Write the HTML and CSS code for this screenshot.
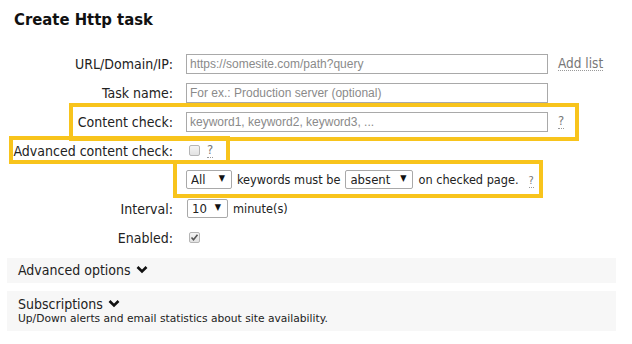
FILE: index.html
```html
<!DOCTYPE html>
<html lang="en">

<head>
    <meta charset="UTF-8">
    <meta name="viewport" content="width=device-width, initial-scale=1.0">
    <title>Create Http task</title>

    <link rel="stylesheet" href="styles.css">
</head>

<body>
    <div class="page">
        <h1 class="title">Create Http task</h1>

        <form action="#" method="post" class="task-form">
            <div class="row">
                <label for="url" class="lbl">URL/Domain/IP:</label>
                <div class="field">
                    <input type="text" id="url" class="text" placeholder="https://somesite.com/path?query">
                    <a href="#" class="hint add-list">Add list</a>
                </div>
            </div>

            <div class="row">
                <label for="name" class="lbl">Task name:</label>
                <div class="field">
                    <input type="text" id="name" class="text" placeholder="For ex.: Production server (optional)">
                </div>
            </div>

            <div class="row">
                <label for="keywords" class="lbl">Content check:</label>
                <div class="field">
                    <input type="text" id="keywords" class="text" placeholder="keyword1, keyword2, keyword3, ...">
                    <a href="#" class="hint q">?</a>
                </div>
            </div>

            <div class="row">
                <label class="lbl">Advanced content check:</label>
                <div class="field">
                    <span class="cb"></span>
                    <a href="#" class="hint q q-adv">?</a>
                </div>
            </div>

            <div class="row">
                <span class="lbl"></span>
                <div class="field">
                    <span class="sel sel-all"><select>
                        <option>All</option>
                        <option>Any</option>
                    </select></span>
                    <span class="txt">keywords must be</span>
                    <span class="sel sel-absent"><select>
                        <option>absent</option>
                        <option>present</option>
                    </select></span>
                    <span class="txt">on checked page.</span>
                    <a href="#" class="hint q q-small">?</a>
                </div>
            </div>

            <div class="row">
                <label class="lbl">Interval:</label>
                <div class="field">
                    <span class="sel sel-interval"><select>
                        <option>10</option>
                        <option>5</option>
                        <option>1</option>
                    </select></span>
                    <span class="txt">minute(s)</span>
                </div>
            </div>

            <div class="row">
                <label class="lbl">Enabled:</label>
                <div class="field">
                    <span class="cb checked">
                        <svg width="9" height="9" viewBox="0 0 9 9">
                            <path d="M1.5 4.5 L3.5 6.8 L7.5 1.8" fill="none" stroke="#555" stroke-width="1.6"/>
                        </svg>
                    </span>
                </div>
            </div>

            <div class="panel">
                <span class="panel-head">Advanced options
                    <svg class="chev" width="12" height="9" viewBox="0 0 12 9">
                        <path d="M1.5 2 L6 6.5 L10.5 2" fill="none" stroke="#111" stroke-width="2.6"/>
                    </svg>
                </span>
            </div>

            <div class="panel panel-subs">
                <span class="panel-head">Subscriptions
                    <svg class="chev" width="12" height="9" viewBox="0 0 12 9">
                        <path d="M1.5 2 L6 6.5 L10.5 2" fill="none" stroke="#111" stroke-width="2.6"/>
                    </svg>
                </span>
                <div class="panel-note">Up/Down alerts and email statistics about site availability.</div>
            </div>
        </form>

        <!-- highlight frames drawn over the form -->
        <span class="mark mark-content"></span>
        <span class="mark mark-adv"></span>
        <span class="mark mark-rule"></span>
    </div>
</body>

</html>
```

FILE: styles.css
```css
* {
    box-sizing: border-box;
    padding: 0;
    margin: 0;
}

body {
    background-color: white;
    font-family: "DejaVu Sans Condensed", "DejaVu Sans", sans-serif;
    font-size: 13px;
    color: #222;
}

.page {
    position: relative;
    width: 632px;
    height: 344px;
}

.title {
    padding: 10px 0 0 14px;
    height: 49px;
    font-size: 16.5px;
    line-height: 20px;
    font-weight: bold;
    color: #111;
}

.row {
    display: flex;
    align-items: center;
    height: 29px;
}

.lbl {
    width: 173px;
    text-align: right;
    flex-shrink: 0;
    font-size: 14px;
}

.field {
    display: flex;
    align-items: center;
    padding-left: 13px;
}

.text {
    width: 362px;
    height: 20px;
    padding: 0 3px;
    border: 1px solid #a9a9a9;
    font-family: "Liberation Sans", Arial, sans-serif;
    font-size: 12px;
    color: #333;
}

.text::placeholder {
    color: #8a8a8a;
}

a {
    text-decoration: none;
    color: #777;
}

.hint {
    border-bottom: 1px dotted #999;
    line-height: 14px;
}

.add-list {
    margin-left: 10px;
    font-size: 13.5px;
}

.q {
    margin-left: 10px;
}

.q-adv {
    margin-left: 7px;
}

.q-small {
    margin-left: 5px;
    font-size: 11px;
    line-height: 12px;
    margin-top: 4px;
}

.cb {
    display: inline-flex;
    align-items: center;
    justify-content: center;
    width: 11px;
    height: 11px;
    margin-left: 3px;
    border: 1px solid #b5b5b5;
    border-radius: 2px;
    background: linear-gradient(#f4f4f4, #e2e2e2);
}

.sel {
    position: relative;
    display: inline-block;
}

.sel select {
    appearance: none;
    -webkit-appearance: none;
    height: 19px;
    padding: 0 0 0 4px;
    border: 1px solid #a9a9a9;
    border-radius: 2px;
    background-color: white;
    font-family: "DejaVu Sans Condensed", "DejaVu Sans", sans-serif;
    font-size: 13px;
    color: #222;
}

.sel::after {
    content: "\25BC";
    position: absolute;
    right: 7px;
    top: 3px;
    font-size: 9px;
    color: #111;
    pointer-events: none;
}

.sel-all select {
    width: 46px;
}

.sel-absent select {
    width: 68px;
}

.sel-interval {
    margin-left: 1px;
}

.sel-interval select {
    width: 41px;
}

.txt {
    margin: 0 5px;
    font-size: 12.6px;
}

.panel {
    margin: 6px 16px 0 7px;
    height: 25px;
    padding: 4px 11px;
    background-color: #f7f7f7;
    font-size: 14px;
    line-height: 17px;
}

.panel-subs {
    margin-top: 8px;
    height: 40px;
    padding-top: 5px;
}

.chev {
    margin-left: 1px;
    vertical-align: 1px;
}

.panel-note {
    font-family: "DejaVu Sans", sans-serif;
    font-size: 10.7px;
    line-height: 12px;
    color: #222;
}

.mark {
    position: absolute;
    border: 4px solid #f8c41c;
    pointer-events: none;
}

.mark-content {
    left: 69px;
    top: 103px;
    width: 510px;
    height: 38px;
}

.mark-adv {
    left: 9px;
    top: 136px;
    width: 221px;
    height: 28px;
}

.mark-rule {
    left: 173px;
    top: 160px;
    width: 370px;
    height: 38px;
}
```
